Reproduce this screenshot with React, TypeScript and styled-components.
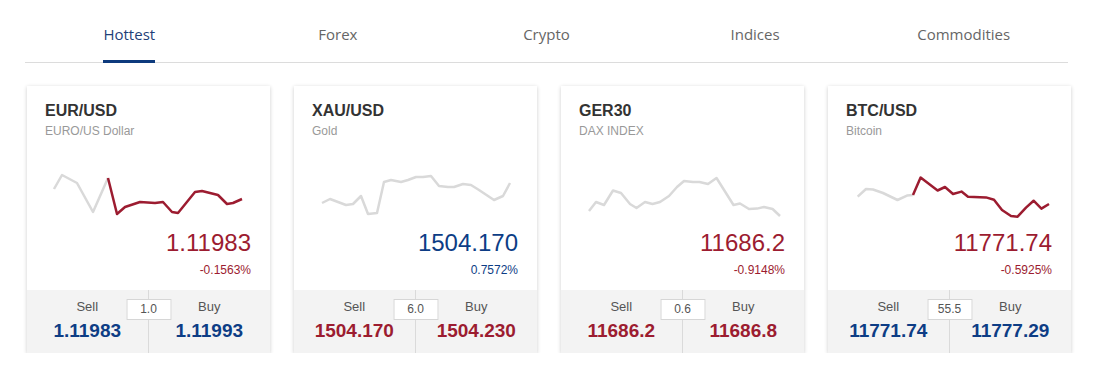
import React from "react";
import styled, { createGlobalStyle } from "styled-components";

const RED = "#9c1c30";
const BLUE = "#0d3d85";

const Global = createGlobalStyle`
  html, body { margin: 0; padding: 0; background: #fff; }
  body { font-family: "Liberation Sans", Arial, sans-serif; }
`;

const Page = styled.div`
  width: 1103px;
  padding: 0 0 0 25px;
  box-sizing: border-box;
`;

const TabBar = styled.nav`
  width: 1043px;
  display: flex;
  border-bottom: 1px solid #dcdcdc;
`;

const Tab = styled.div`
  flex: 1;
  display: flex;
  justify-content: center;
`;

const TabLabel = styled.span<{ $active?: boolean }>`
  font-family: "Open Sans", "Segoe UI", sans-serif;
  font-size: 15px;
  line-height: 20px;
  padding: 24px 0 16px;
  color: ${(p) => (p.$active ? "#1f3f78" : "#666")};
  border-bottom: 3px solid ${(p) => (p.$active ? "#0d3a7d" : "transparent")};
  margin-bottom: -1px;
`;

const Cards = styled.div`
  margin: 23px 0 0 2px;
  width: 1043px;
  display: grid;
  grid-template-columns: repeat(4, 1fr);
  gap: 24px;
`;

const Card = styled.div`
  background: #fff;
  box-shadow: 0 1px 4px rgba(0, 0, 0, 0.2);
  display: flex;
  flex-direction: column;
`;

const Body = styled.div`
  padding: 16px 19px 13px 18px;
  display: flex;
  flex-direction: column;
`;

const Symbol = styled.div`
  font-size: 16px;
  line-height: 18px;
  font-weight: 700;
  color: #333;
`;

const Name = styled.div`
  margin-top: 4px;
  font-size: 12px;
  line-height: 14px;
  color: #999;
`;

const Chart = styled.svg`
  display: block;
  margin: 28px -19px 0 -18px;
  width: 243px;
  height: 60px;
`;

const Price = styled.div<{ $up: boolean }>`
  margin-top: 3px;
  text-align: right;
  font-size: 24px;
  line-height: 28px;
  color: ${(p) => (p.$up ? BLUE : RED)};
`;

const Change = styled.div<{ $up: boolean }>`
  margin-top: 6px;
  text-align: right;
  font-size: 12px;
  line-height: 14px;
  color: ${(p) => (p.$up ? BLUE : RED)};
`;

const Trade = styled.div`
  position: relative;
  height: 63px;
  background: #f3f3f3;
  display: grid;
  grid-template-columns: 1fr 1fr;
`;

const Side = styled.div<{ $first?: boolean }>`
  display: flex;
  flex-direction: column;
  align-items: center;
  padding-top: 9px;
  border-right: ${(p) => (p.$first ? "1px solid #dadada" : "none")};
`;

const SideLabel = styled.div`
  font-size: 13px;
  line-height: 16px;
  color: #555;
`;

const SideValue = styled.div<{ $up: boolean }>`
  margin-top: 5px;
  font-size: 19px;
  line-height: 22px;
  font-weight: 700;
  color: ${(p) => (p.$up ? BLUE : RED)};
`;

const Spread = styled.div`
  position: absolute;
  top: 9px;
  left: 50%;
  transform: translateX(-50%);
  width: 45px;
  height: 21px;
  box-sizing: border-box;
  background: #fff;
  border: 1px solid #d6d6d6;
  font-size: 12px;
  line-height: 19px;
  text-align: center;
  color: #555;
`;

type Pt = [number, number];

interface Item {
  symbol: string;
  name: string;
  price: string;
  change: string;
  up: boolean;
  sell: string;
  buy: string;
  tradeUp: boolean;
  spread: string;
  pts: Pt[];
  split: number;
}

// y values are absolute page coords; chart svg top is at page y 165
const items: Item[] = [
  {
    symbol: "EUR/USD",
    name: "EURO/US Dollar",
    price: "1.11983",
    change: "-0.1563%",
    up: false,
    sell: "1.11983",
    buy: "1.11993",
    tradeUp: true,
    spread: "1.0",
    split: 4,
    pts: [
      [27, 189], [35, 175], [50, 183], [66, 212], [81, 178], [90, 214], [98, 207],
      [113, 202], [128, 203], [136, 202], [145, 212], [151, 213], [168, 192],
      [175, 191], [191, 195], [200, 204], [206, 203], [215, 199],
    ],
  },
  {
    symbol: "XAU/USD",
    name: "Gold",
    price: "1504.170",
    change: "0.7572%",
    up: true,
    sell: "1504.170",
    buy: "1504.230",
    tradeUp: false,
    spread: "6.0",
    split: -1,
    pts: [
      [28, 203], [36, 199], [52, 205], [59, 204], [67, 196], [74, 214], [83, 213],
      [90, 182], [97, 180], [107, 182], [114, 180], [122, 177], [129, 177],
      [137, 176], [145, 186], [154, 187], [160, 187], [169, 184], [177, 185],
      [185, 190], [200, 200], [209, 196], [216, 183],
    ],
  },
  {
    symbol: "GER30",
    name: "DAX INDEX",
    price: "11686.2",
    change: "-0.9148%",
    up: false,
    sell: "11686.2",
    buy: "11686.8",
    tradeUp: false,
    spread: "0.6",
    split: -1,
    pts: [
      [28, 211], [35, 202], [43, 205], [52, 190.5], [60, 193], [69, 204],
      [75.5, 208], [84, 202], [91.5, 204], [99, 202], [108, 196], [116, 187],
      [123, 181], [132, 182], [138.5, 182], [147, 184], [155.5, 178], [172.5, 205],
      [179, 203.5], [188, 209], [196, 208.6], [203, 207], [211.6, 209], [219, 216],
    ],
  },
  {
    symbol: "BTC/USD",
    name: "Bitcoin",
    price: "11771.74",
    change: "-0.5925%",
    up: false,
    sell: "11771.74",
    buy: "11777.29",
    tradeUp: true,
    spread: "55.5",
    split: 6,
    pts: [
      [29.7, 196.7], [38, 189], [45, 189.5], [55, 193], [69.5, 200], [79, 195.6],
      [85, 195], [92.6, 177.6], [109.6, 190.5], [117, 187], [125, 194],
      [133.5, 191.6], [140, 196.7], [158, 197.4], [166, 199.7], [174, 210],
      [183, 216], [189.6, 216.7], [198, 207.6], [205.6, 200.7], [213.4, 208.6],
      [221, 204],
    ],
  },
];

const toPath = (pts: Pt[]) =>
  pts.map(([x, y], i) => `${i ? "L" : "M"}${x} ${y - 166}`).join(" ");

function Spark({ pts, split }: { pts: Pt[]; split: number }) {
  const gray = split < 0 ? pts : pts.slice(0, split + 1);
  const red = split < 0 ? [] : pts.slice(split);
  return (
    <Chart viewBox="0 0 243 60">
      <path d={toPath(gray)} fill="none" stroke="#d9d9d9" strokeWidth={2.5} strokeLinejoin="round" />
      {red.length > 0 && (
        <path d={toPath(red)} fill="none" stroke={RED} strokeWidth={2.5} strokeLinejoin="round" />
      )}
    </Chart>
  );
}

export default function App() {
  const tabs = ["Hottest", "Forex", "Crypto", "Indices", "Commodities"];
  return (
    <Page>
      <Global />
      <TabBar>
        {tabs.map((t, i) => (
          <Tab key={t}>
            <TabLabel $active={i === 0}>{t}</TabLabel>
          </Tab>
        ))}
      </TabBar>
      <Cards>
        {items.map((it) => (
          <Card key={it.symbol}>
            <Body>
              <Symbol>{it.symbol}</Symbol>
              <Name>{it.name}</Name>
              <Spark pts={it.pts} split={it.split} />
              <Price $up={it.up}>{it.price}</Price>
              <Change $up={it.up}>{it.change}</Change>
            </Body>
            <Trade>
              <Side $first>
                <SideLabel>Sell</SideLabel>
                <SideValue $up={it.tradeUp}>{it.sell}</SideValue>
              </Side>
              <Side>
                <SideLabel>Buy</SideLabel>
                <SideValue $up={it.tradeUp}>{it.buy}</SideValue>
              </Side>
              <Spread>{it.spread}</Spread>
            </Trade>
          </Card>
        ))}
      </Cards>
    </Page>
  );
}
